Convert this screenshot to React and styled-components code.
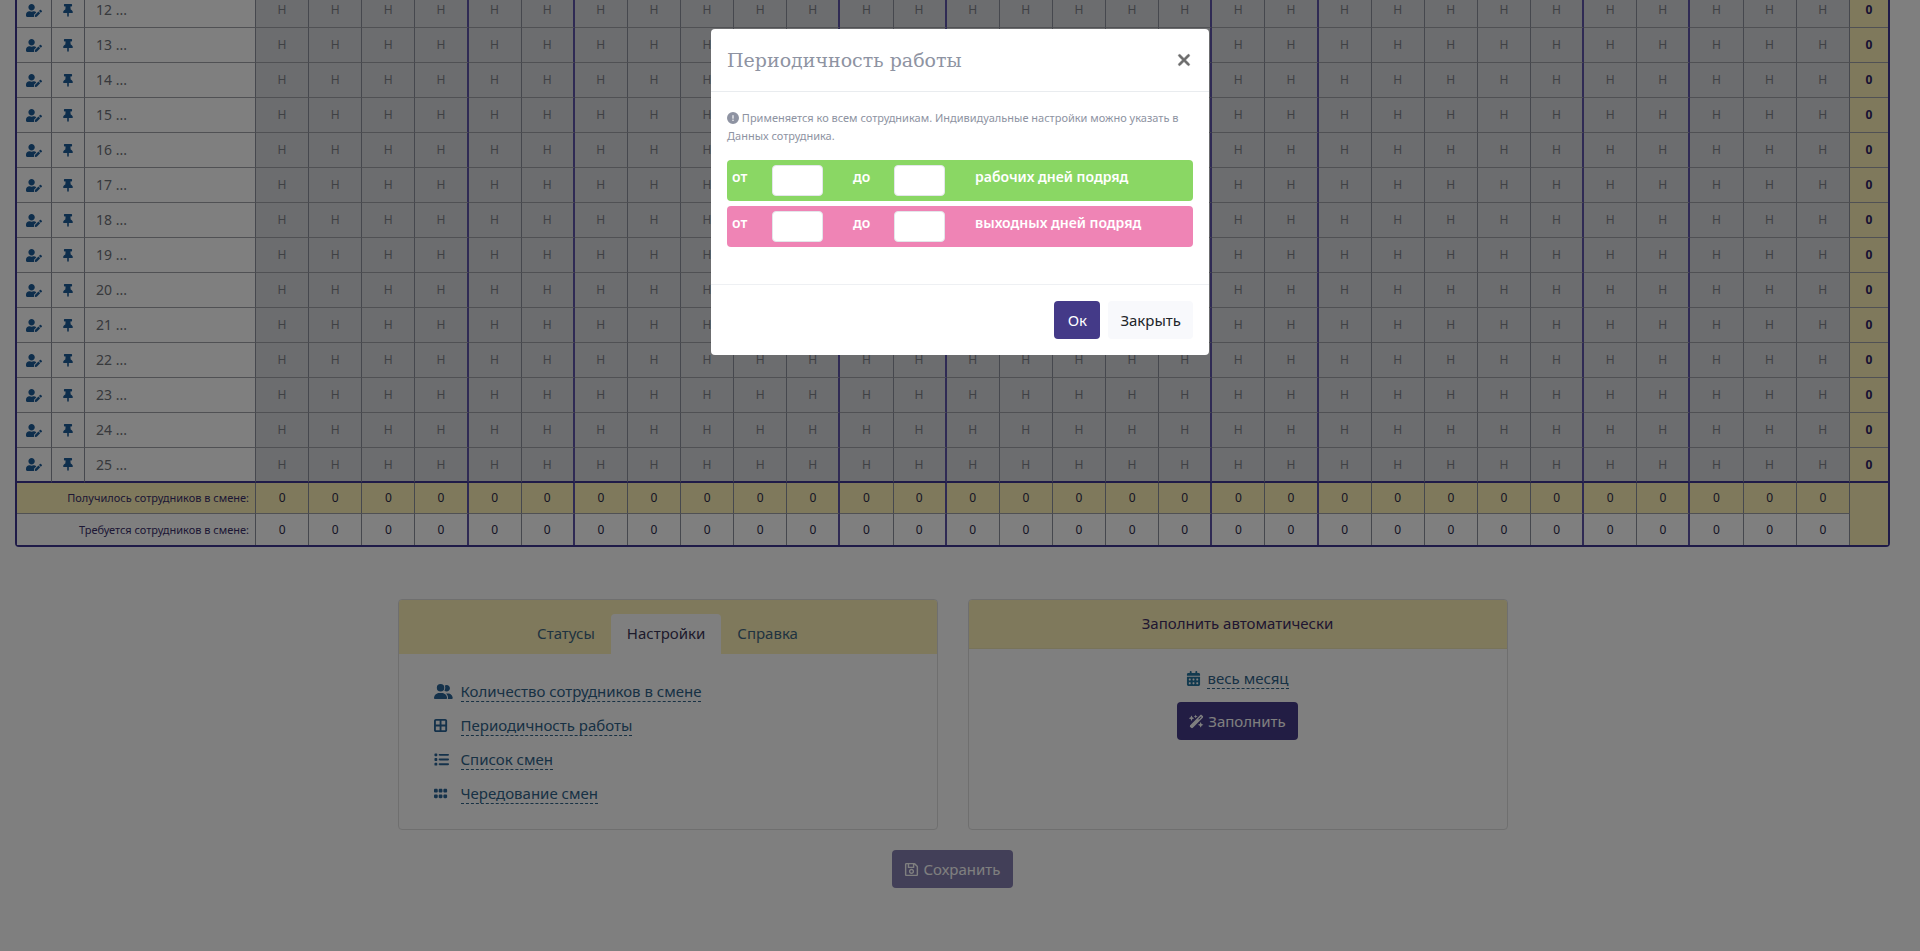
import styled, { createGlobalStyle } from "styled-components";
import { FaUserEdit, FaThumbtack, FaRegSave } from "react-icons/fa";
import {
  FaUserGroup,
  FaBorderAll,
  FaList,
  FaGrip,
  FaCalendarDays,
  FaWandMagicSparkles,
  FaCircleExclamation,
  FaXmark,
} from "react-icons/fa6";

const GlobalStyle = createGlobalStyle`
  * {
    box-sizing: border-box;
  }

  body {
    margin: 0;
    background: #fff;
    color: #212529;
    font-family: "Noto Sans", "Open Sans", sans-serif;
    font-size: 15px;
    line-height: 24px;
  }

  button,
  input {
    font: inherit;
  }
`;

//PAGE

const Page = styled.main`
  min-height: 100vh;
  padding: 0 30px 0 15px;
  overflow: hidden;
`;

//SCHEDULE

const Schedule = styled.table`
  width: 100%;
  margin-top: -9px;

  table-layout: fixed;
  border: 2px solid #3f3690;
  border-radius: 4px;
  border-collapse: separate;
  border-spacing: 0;
`;

const Col = styled.col`
  width: ${(props) => props.$width};
`;

const Cell = styled.td`
  height: 35px;
  padding: 0;

  text-align: center;
  color: ${(props) => props.$color || "#2d2b4a"};
  font-size: 12px;
  line-height: 20px;
  background: ${(props) => props.$bg || "#fff"};
  border-right: ${(props) =>
    props.$week ? "2px solid #5f55a8" : "1px solid #8d909c"};
  border-bottom: ${(props) =>
    props.$last ? "2px solid #3f3690" : "1px solid #a0a2a8"};
`;

const NameCell = styled(Cell)`
  padding-left: 11px;
  text-align: left;
  color: #6f7278;
  font-size: 14px;
`;

const TotalCell = styled(Cell)`
  font-weight: 700;
  color: #2f2466;
  border-right: 0;
`;

const CornerCell = styled.td`
  background: #fff3b8;
`;

const LabelCell = styled.th`
  height: 31px;
  padding: 0 6px 0 0;

  text-align: right;
  font-size: 11px;
  font-weight: 400;
  line-height: 20px;
  color: #3a2f6b;
  background: ${(props) => props.$bg || "#fff"};
  border-right: 1px solid #8d909c;
  border-bottom: ${(props) => (props.$end ? "0" : "1px solid #a0a2a8")};
`;

const CountCell = styled(Cell)`
  height: 31px;
  border-bottom: ${(props) => (props.$end ? "0" : "1px solid #a0a2a8")};
`;

const IconButton = styled.button`
  display: flex;
  justify-content: center;
  align-items: center;

  width: 100%;
  padding: 0;

  cursor: pointer;
  color: #1d5c99;
  background: none;
  border: 0;

  svg {
    width: 16px;
    height: 13px;
  }
`;

//CARDS

const Cards = styled.div`
  display: grid;
  grid-template-columns: 1fr 1fr;
  gap: 30px;

  max-width: 1110px;
  margin: 52px auto 20px;
`;

const Card = styled.section`
  display: flex;
  flex-direction: column;

  min-height: 231px;
  border: 1px solid #dfdfdf;
  border-radius: 4px;
  overflow: hidden;
`;

const CardHeader = styled.h2`
  margin: 0;
  padding: 11px 12px 13px;

  text-align: center;
  color: #3f2d63;
  font-size: 15px;
  font-weight: 400;
  line-height: 24px;
  background: #fff3b8;
  border-bottom: 1px solid #f0e6b4;
`;

const Tabs = styled.nav`
  display: flex;
  justify-content: center;

  padding-top: 14px;
  background: #fff3b8;
`;

const Tab = styled.a`
  padding: 7px 16px 9px;

  text-decoration: none;
  color: ${(props) => (props.$active ? "#3b3658" : "#3f6680")};
  background: ${(props) => (props.$active ? "#fff" : "transparent")};
  border-radius: 4px 4px 0 0;
`;

const SettingsList = styled.ul`
  display: flex;
  flex-direction: column;
  gap: 13px;

  margin: 0;
  padding: 27px 35px 25px;
  list-style: none;
`;

const SettingsItem = styled.li`
  display: flex;
  align-items: center;
`;

const SettingsIcon = styled.span`
  display: flex;
  width: 27px;
  color: #2a6597;

  svg {
    width: 19px;
    height: 15px;
  }
`;

const DashedLink = styled.a`
  line-height: 20px;
  text-decoration: none;
  color: #2f6288;
  border-bottom: 1px dashed #2f6288;
`;

const FillBody = styled.div`
  display: flex;
  flex-direction: column;
  align-items: center;
  gap: 13px;

  padding: 19px;
`;

const Period = styled.div`
  display: flex;
  align-items: center;
  gap: 6px;
  color: #24749e;
`;

const Button = styled.button`
  display: flex;
  justify-content: center;
  align-items: center;
  gap: 4px;

  min-width: 46px;
  padding: 7px 12px;

  cursor: pointer;
  color: ${(props) => (props.$light ? "#212529" : "#fff")};
  background: ${(props) => (props.$light ? "#f8f9fc" : "#443a88")};
  border: 0;
  border-radius: 4px;

  &:disabled {
    cursor: default;
    opacity: 0.65;
  }
`;

const SaveRow = styled.div`
  display: flex;
  justify-content: center;
`;

//MODAL

const Overlay = styled.div`
  position: fixed;
  inset: 0;

  display: flex;
  justify-content: center;
  align-items: flex-start;

  padding: 29px 16px;
  background: rgba(0, 0, 0, 0.5);
`;

const Dialog = styled.div`
  width: 100%;
  max-width: 498px;

  background: #fff;
  border-radius: 4px;
`;

const DialogHeader = styled.div`
  display: flex;
  justify-content: space-between;
  align-items: center;

  padding: 16px;
  border-bottom: 1px solid #e9ecef;
`;

const DialogTitle = styled.h1`
  margin: 0;

  color: #8e93a2;
  font-family: "Roboto Slab", "DejaVu Serif", serif;
  font-size: 19px;
  font-weight: 400;
  line-height: 30px;
`;

const CloseButton = styled.button`
  display: flex;
  padding: 0;

  cursor: pointer;
  color: #6b6b6b;
  font-size: 18px;
  background: none;
  border: 0;

  svg {
    stroke: currentColor;
    stroke-width: 16px;
  }
`;

const DialogBody = styled.div`
  display: flex;
  flex-direction: column;
  gap: 5px;

  padding: 17px 16px 37px;
`;

const Hint = styled.p`
  margin: 0 0 10px;

  color: #8e93a2;
  font-size: 11px;
  line-height: 18px;

  svg {
    width: 12px;
    height: 12px;
    vertical-align: -2px;
  }
`;

const Range = styled.div`
  display: grid;
  grid-template-columns: 40px 81px 41px 81px 1fr;

  padding: 5px;

  color: #fff;
  font-size: 14px;
  font-weight: 600;
  line-height: 24px;
  background: ${(props) => props.$bg};
  border-radius: 4px;
`;

const RangeInput = styled.input`
  width: 51px;
  height: 31px;
  padding: 4px 8px;

  background: #fff;
  border: 1px solid #e3e6ea;
  border-radius: 4px;
`;

const DialogFooter = styled.div`
  display: flex;
  justify-content: flex-end;
  gap: 8px;

  padding: 16px;
  border-top: 1px solid #eef0f3;
`;

const YELLOW = "#fff3b8";
const GREY = "#d8dade";

const rows = Array.from({ length: 14 }, (_, i) => i + 12);
const days = Array.from({ length: 30 }, (_, i) => i + 1);

// days after which a week or a weekend ends
const weekEnds = [4, 6, 11, 13, 18, 20, 25, 27];

const ranges = [
  { id: "work", bg: "#8ad764", label: "рабочих дней подряд" },
  { id: "rest", bg: "#ef84b5", label: "выходных дней подряд" },
];

const settings = [
  { icon: FaUserGroup, label: "Количество сотрудников в смене" },
  { icon: FaBorderAll, label: "Периодичность работы" },
  { icon: FaList, label: "Список смен" },
  { icon: FaGrip, label: "Чередование смен" },
];

const ScheduleTable = () => (
  <Schedule>
    <colgroup>
      <Col $width="35px" />
      <Col $width="33px" />
      <Col $width="171px" />
      {days.map((d) => (
        <Col key={d} />
      ))}
      <Col $width="38px" />
    </colgroup>
    <tbody>
      {rows.map((n) => {
        const last = n === 25;
        return (
          <tr key={n}>
            <Cell $last={last}>
              <IconButton type="button" aria-label="Данные сотрудника">
                <FaUserEdit />
              </IconButton>
            </Cell>
            <Cell $last={last}>
              <IconButton type="button" aria-label="Закрепить">
                <FaThumbtack />
              </IconButton>
            </Cell>
            <NameCell $last={last}>{n} ...</NameCell>
            {days.map((d) => (
              <Cell
                key={d}
                $bg={GREY}
                $color="#7f8288"
                $week={weekEnds.includes(d)}
                $last={last}
              >
                Н
              </Cell>
            ))}
            <TotalCell $bg={YELLOW} $last={last}>
              0
            </TotalCell>
          </tr>
        );
      })}
      <tr>
        <LabelCell colSpan={3} $bg={YELLOW}>
          Получилось сотрудников в смене:
        </LabelCell>
        {days.map((d) => (
          <CountCell key={d} $bg={YELLOW} $week={weekEnds.includes(d)}>
            0
          </CountCell>
        ))}
        <CornerCell rowSpan={2} />
      </tr>
      <tr>
        <LabelCell colSpan={3} $end>
          Требуется сотрудников в смене:
        </LabelCell>
        {days.map((d) => (
          <CountCell key={d} $end $week={weekEnds.includes(d)}>
            0
          </CountCell>
        ))}
      </tr>
    </tbody>
  </Schedule>
);

const PeriodDialog = () => (
  <Overlay>
    <Dialog role="dialog" aria-labelledby="period-title">
      <DialogHeader>
        <DialogTitle id="period-title">Периодичность работы</DialogTitle>
        <CloseButton type="button" aria-label="Закрыть">
          <FaXmark />
        </CloseButton>
      </DialogHeader>
      <DialogBody>
        <Hint>
          <FaCircleExclamation /> Применяется ко всем сотрудникам.
          Индивидуальные настройки можно указать в Данных сотрудника.
        </Hint>
        {ranges.map((r) => (
          <Range key={r.id} $bg={r.bg}>
            <label htmlFor={`${r.id}-from`}>от</label>
            <RangeInput id={`${r.id}-from`} type="text" />
            <label htmlFor={`${r.id}-to`}>до</label>
            <RangeInput id={`${r.id}-to`} type="text" />
            <span>{r.label}</span>
          </Range>
        ))}
      </DialogBody>
      <DialogFooter>
        <Button type="button">Ок</Button>
        <Button type="button" $light>
          Закрыть
        </Button>
      </DialogFooter>
    </Dialog>
  </Overlay>
);

const App = () => {
  return (
    <>
      <GlobalStyle />
      <Page>
        <ScheduleTable />
        <Cards>
          <Card>
            <Tabs>
              <Tab href="#statuses">Статусы</Tab>
              <Tab href="#settings" $active>
                Настройки
              </Tab>
              <Tab href="#help">Справка</Tab>
            </Tabs>
            <SettingsList>
              {settings.map(({ icon: Icon, label }) => (
                <SettingsItem key={label}>
                  <SettingsIcon>
                    <Icon preserveAspectRatio="xMinYMid meet" />
                  </SettingsIcon>
                  <DashedLink href="#settings">{label}</DashedLink>
                </SettingsItem>
              ))}
            </SettingsList>
          </Card>
          <Card>
            <CardHeader>Заполнить автоматически</CardHeader>
            <FillBody>
              <Period>
                <FaCalendarDays />
                <DashedLink href="#period">весь месяц</DashedLink>
              </Period>
              <Button type="button">
                <FaWandMagicSparkles /> Заполнить
              </Button>
            </FillBody>
          </Card>
        </Cards>
        <SaveRow>
          <Button type="button" disabled>
            <FaRegSave /> Сохранить
          </Button>
        </SaveRow>
      </Page>
      <PeriodDialog />
    </>
  );
};

export default App;
